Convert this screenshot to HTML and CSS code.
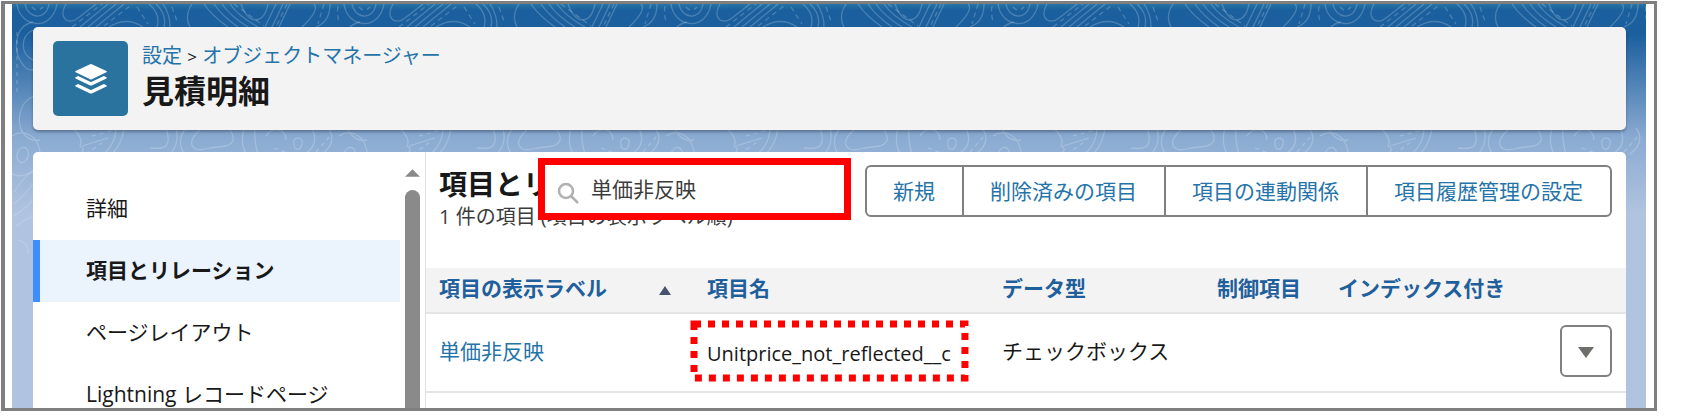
FILE: index.html
```html
<!DOCTYPE html>
<html lang="ja">
<head>
  <meta charset="UTF-8" />
  <title>見積明細 | オブジェクトマネージャー</title>
  <link rel="stylesheet" href="styles.css">
</head>
<body>
  <div class="frame">
    <div class="page">
      <svg class="contours" aria-hidden="true">
        <defs>
          <pattern id="topo" width="327" height="410" patternUnits="userSpaceOnUse">
            <g fill="none" stroke="#fff" stroke-opacity=".2" stroke-width="1.3">
              <!-- upper band -->
              <path d="M5 0C8 24 40 28 45 0M13 0C15 14 34 18 37 0M54 0C46 14 56 22 66 14L84 0M68 23L96 0M76 23L104 0M84 23L112 0" />
              <path d="M97 23Q115 12 131 23M137 0Q149 10 145 23M144 0Q155 10 152 23M151 0Q158 10 158 23M180 0Q172 12 178 23M192 0Q200 12 216 23M202 0Q210 12 226 23M210 0Q218 12 236 23M218 0Q226 12 246 23" />
              <path d="M229 0C237 22 252 20 256 0M264 0L253 23M271 0L260 23M278 0L267 23M302 0Q308 6 290 23M318 0Q318 18 304 23" />
              <path stroke-dasharray="5 4" d="M20 3Q25 9 31 3M60 23L90 0M92 22L118 2M125 3L136 20M160 3L166 20M222 0L252 22M275 0L264 23M326 2Q324 14 330 23M312 0L306 20" />
              <!-- side and middle band -->
              <path d="M21 18C2 22 0 48 12 62C16 68 24 66 30 62M21 26C8 32 8 50 21 56M22 92C6 98 4 120 12 130Q18 138 28 136M0 132C12 124 26 132 28 148C30 164 14 176 0 170M5 150C8 140 18 142 16 152S4 160 5 150" />
              <path d="M60 124Q72 134 68 142Q76 146 64 152M70 142L96 134M112 124Q110 140 100 150M104 126Q103 140 92 150M154 124C160 142 154 146 138 144M164 124Q168 140 158 150M174 124Q164 136 172 150" />
              <path d="M188 126C174 138 178 150 198 144L214 142Q226 138 218 126M232 124Q228 138 234 150M243 124Q242 138 246 150M254 132C260 122 274 124 274 136M282 140C280 132 292 132 290 140S282 146 282 140M300 124Q308 142 292 150M316 124Q326 138 310 150M340 132Q352 138 358 150" />
              <path stroke-dasharray="4 4" d="M5 28L5 90M80 132L110 124M74 150L94 136M262 144L278 150M304 148L320 130" />
              <path d="M2 188Q12 172 21 168M2 200Q14 190 21 180M2 212Q14 204 21 196M4 222Q12 216 21 212M6 236Q18 240 16 250" stroke-opacity=".14" />
            </g>
          </pattern>
        </defs>
        <rect width="100%" height="100%" fill="url(#topo)" />
      </svg>

      <header class="page-header">
        <div class="header-icon">
          <svg width="34" height="34" viewBox="0 0 34 34" aria-hidden="true">
            <g fill="#fff">
              <path d="M16.2 2.2q.8-.4 1.6 0l14.6 6.9q1 .6 0 1.2l-14.6 7q-.8.4-1.6 0l-14.6-7q-1-.6 0-1.2z" />
              <path d="M1.6 15.2l2.5-1.2 12.1 5.8q.8.4 1.6 0l12.1-5.8 2.5 1.2q1 .6 0 1.2l-14.6 7q-.8.4-1.6 0l-14.6-7q-1-.6 0-1.2z" />
              <path d="M1.6 23.2l2.5-1.2 12.1 5.8q.8.4 1.6 0l12.1-5.8 2.5 1.2q1 .6 0 1.2l-14.6 7q-.8.4-1.6 0l-14.6-7q-1-.6 0-1.2z" />
            </g>
          </svg>
        </div>
        <div>
          <nav class="breadcrumb" aria-label="パンくず"><a href="#">設定</a> <span>&gt;</span> <a href="#">オブジェクトマネージャー</a></nav>
          <h1>見積明細</h1>
        </div>
      </header>

      <div class="content">
        <nav class="sidebar" aria-label="オブジェクト設定">
          <ul>
            <li><a href="#">詳細</a></li>
            <li class="active"><a href="#" aria-current="page">項目とリレーション</a></li>
            <li><a href="#">ページレイアウト</a></li>
            <li><a href="#">Lightning レコードページ</a></li>
          </ul>
          <div class="scrollbar" aria-hidden="true">
            <svg width="15" height="8" viewBox="0 0 16 8"><path fill="#8a8a8a" d="M8 0l8 8H0z" /></svg>
            <div class="thumb"></div>
          </div>
        </nav>

        <main>
          <div class="toolbar">
            <div class="heading">
              <h2>項目とリレーション</h2>
              <p>1 件の項目 (項目の表示ラベル順)</p>
            </div>
            <label class="search">
              <svg width="22" height="22" viewBox="0 0 22 22" aria-hidden="true">
                <g fill="none" stroke="#b0b0b0" stroke-width="2.5">
                  <circle cx="9" cy="9" r="7" />
                  <path d="M14 14l7 7" />
                </g>
              </svg>
              <input type="text" value="単価非反映" aria-label="クイック検索">
            </label>
            <div class="button-group">
              <button type="button">新規</button>
              <button type="button">削除済みの項目</button>
              <button type="button">項目の連動関係</button>
              <button type="button">項目履歴管理の設定</button>
            </div>
          </div>

          <table>
            <colgroup>
              <col class="col-label">
              <col class="col-name">
              <col class="col-type">
              <col class="col-control">
              <col>
              <col class="col-action">
            </colgroup>
            <thead>
              <tr>
                <th>
                  <div class="sorted">項目の表示ラベル
                    <svg width="12" height="9" viewBox="0 0 12 9" aria-hidden="true"><path fill="#44546a" d="M6 0l6 9H0z" /></svg>
                  </div>
                </th>
                <th>項目名</th>
                <th>データ型</th>
                <th>制御項目</th>
                <th>インデックス付き</th>
                <th></th>
              </tr>
            </thead>
            <tbody>
              <tr>
                <td><a href="#">単価非反映</a></td>
                <td>
                  <span class="api-name">Unitprice_not_reflected__c
                    <svg class="marker" aria-hidden="true"><rect width="100%" height="100%" /></svg>
                  </span>
                </td>
                <td>チェックボックス</td>
                <td></td>
                <td></td>
                <td>
                  <button type="button" class="row-menu" aria-label="アクション">
                    <svg width="16" height="11" viewBox="0 0 16 11" aria-hidden="true"><path fill="#706e6b" d="M0 0h16L8 11z" /></svg>
                  </button>
                </td>
              </tr>
            </tbody>
          </table>
        </main>
      </div>
    </div>
  </div>
</body>
</html>
```
FILE: styles.css
```css
* {
  box-sizing: border-box;
}
body {
  margin: 0;
  background: #fff;
  color: #181818;
  font-family: "Open Sans", "Noto Sans CJK JP", sans-serif;
  font-size: 21px;
  line-height: 30px;
}
h1, h2, p, ul {
  margin: 0;
  padding: 0;
}
a {
  color: #2574a9;
  text-decoration: none;
}
svg {
  display: block;
  flex: none;
}
button, input {
  font: inherit;
}
.frame {
  height: calc(100vh - 7px);
  margin: 1px 32px 6px 1px;
  padding: 0 8px 0 7px;
  border: 3px solid #7f7f7f;
  border-left-width: 4px;
  overflow: hidden;
}
.page {
  position: relative;
  display: flex;
  flex-direction: column;
  gap: 22px;
  height: 100%;
  padding: 23px 20px 0 21px;
  background: linear-gradient(#2674a5 0, #1b5f9e 6px, #1b5f9e 30px, #8babd2 135px, #b0c4df 210px);
}
.contours {
  position: absolute;
  top: 0;
  left: 0;
  width: 100%;
  height: 100%;
}
.page-header {
  position: relative;
  display: flex;
  gap: 14px;
  padding: 14px 20px;
  background: #f3f3f3;
  border-radius: 5px;
  box-shadow: 0 2px 3px rgba(0, 0, 0, 0.3);
}
.header-icon {
  display: flex;
  align-items: center;
  justify-content: center;
  width: 75px;
  height: 75px;
  background: #2a739e;
  border-radius: 5px;
}
.breadcrumb {
  font-size: 20px;
}
.breadcrumb span {
  font-size: 17px;
}
h1 {
  font-size: 32px;
  line-height: 38px;
}
.content {
  position: relative;
  display: flex;
  flex: 1;
  min-height: 0;
  background: #fff;
  border-radius: 5px 5px 0 0;
  overflow: hidden;
}
.sidebar {
  display: flex;
  gap: 5px;
  width: 393px;
  flex: none;
  border-right: 1px solid #e0e0e0;
}
.sidebar ul {
  flex: 1;
  padding-top: 26px;
  list-style: none;
}
.sidebar li {
  padding: 15px 0 17px 46px;
  border-left: 7px solid transparent;
}
.sidebar li.active {
  background: #ebf3fd;
  border-color: #3e8df8;
  font-weight: bold;
}
.sidebar a {
  color: #181818;
}
.scrollbar {
  display: flex;
  flex-direction: column;
  gap: 13px;
  width: 20px;
  padding: 17px 5px 0 0;
}
.thumb {
  flex: 1;
  background: #8a8a8a;
  border-radius: 8px 8px 0 0;
}
main {
  flex: 1;
  min-width: 0;
}
.toolbar {
  position: relative;
  display: flex;
  justify-content: space-between;
  align-items: flex-start;
  height: 116px;
  padding: 13px 14px 0 13px;
}
.heading {
  white-space: nowrap;
}
h2 {
  font-size: 28px;
  line-height: 38px;
}
.heading p {
  font-size: 20px;
  line-height: 28px;
  color: #3c3c3c;
}
/* quick find, floats over the heading */
.search {
  position: absolute;
  top: 6px;
  left: 112px;
  display: flex;
  align-items: center;
  gap: 12px;
  width: 313px;
  height: 62px;
  padding: 0 12px;
  background: #fff;
  border: 7px solid #f00;
}
.search svg {
  margin-top: 8px;
}
.search input {
  flex: 1;
  min-width: 0;
  padding: 0;
  border: 0;
  outline: 0;
  color: #3c3c3c;
  background: transparent;
}
.button-group {
  display: flex;
}
.button-group button {
  height: 52px;
  margin-left: -2px;
  padding: 0 27px 0 26px;
  background: #fff;
  color: #2574a9;
  border: 2px solid #808080;
  white-space: nowrap;
}
.button-group button:first-child {
  border-radius: 6px 0 0 6px;
}
.button-group button:last-child {
  border-radius: 0 6px 6px 0;
}
table {
  width: 100%;
  border-collapse: collapse;
  table-layout: fixed;
}
.col-label {
  width: 268px;
}
.col-name {
  width: 295px;
}
.col-type {
  width: 215px;
}
.col-control {
  width: 121px;
}
.col-action {
  width: 79px;
}
th, td {
  padding: 0 0 4px 13px;
  text-align: left;
  white-space: nowrap;
  border-bottom: 2px solid #e5e5e5;
}
th {
  height: 45px;
  background: #f3f3f3;
  color: #1f5f9c;
}
td {
  height: 79px;
}
.sorted {
  display: flex;
  align-items: center;
  justify-content: space-between;
  padding-right: 23px;
}
.sorted svg {
  margin-top: 4px;
}
.api-name {
  position: relative;
  display: inline-block;
  padding-top: 6px;
  font-size: 20px;
}
.marker {
  position: absolute;
  top: -9px;
  left: -13px;
  width: calc(100% + 27px);
  height: 54px;
  overflow: visible;
}
.marker rect {
  fill: none;
  stroke: #f00;
  stroke-width: 7;
  stroke-dasharray: 7 7;
}
.row-menu {
  display: flex;
  align-items: center;
  justify-content: center;
  width: 52px;
  height: 52px;
  padding: 4px 0 0;
  background: #fff;
  border: 2px solid #808080;
  border-radius: 6px;
}
```
